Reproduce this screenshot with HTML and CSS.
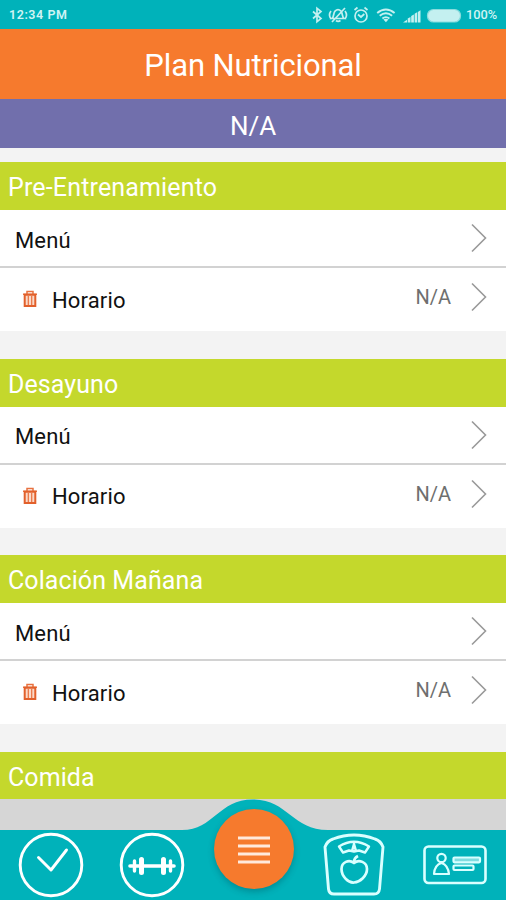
FILE: index.html
```html
<!DOCTYPE html>
<html lang="es">
<head>
<meta charset="utf-8">
<title>Plan Nutricional</title>
<link rel="stylesheet" href="styles.css">
</head>
<body>
<svg class="defs" aria-hidden="true">
  <symbol id="chevron" viewBox="0 0 16 30"><path d="M1 1.5 14.5 15 1 28.5" fill="none" stroke="#999" stroke-width="1.6"/></symbol>
  <symbol id="trash" viewBox="0 0 16 18"><path d="M1 4.200h14M5 3.700V1.500h6v2.200" fill="none" stroke="#e8713f" stroke-width="1.500"/><path d="M2.700 4.700h10.600v11.400H2.700z" fill="#fbd9c8" stroke="#e2602b" stroke-width="2"/><path d="M6.300 6v9M9.700 6v9" stroke="#e8713f" stroke-width="1.200"/></symbol>
</svg>
<div class="app">
  <div class="status">
    <span class="time">12:34 PM</span>
    <svg class="status-icons" viewBox="0 0 154 28" fill="none" stroke="#c4f0f0" stroke-width="1.700">
      <path d="m4 10.500 8 7-4 3.300V7.200l4 3.300-8 7"/>
      <path d="M23 17.500c2-1.500 1.300-5.500 3-7.300q3-3 6 0c1.700 1.800 1 5.800 3 7.300zM27 19.500q2 1.700 4.500 0M23 21 36 7M22 10q-3 4 0 8M36 10q3 4 0 8"/>
      <circle cx="52" cy="15" r="6"/><path d="m49 13.500 3 2.500 3.300-3M45.500 9l3-2.500M58.500 9l-3-2.500"/>
      <path d="M68.200 12q8.700-7 17.400 0M70.700 14.800q6.200-5 12.400 0M73.400 17.400q3.500-2.600 7 0" stroke-width="1.900"/><path d="m74.400 18.500 2.500 2.700 2.500-2.700q-2.500-1.500-5 0z" fill="#c4f0f0" stroke="none"/>
      <path d="M94 21.500 98 18.800V21.500zM98.700 21.500v-4l2.800-1.600v5.600zM102.200 21.500v-6.500l2.700-1.600v8.100zM105.600 21.500v-8.700l2.500-1.500v10.200zM108.800 21.500V11l2.700-1.700v12.200z" fill="#c4f0f0" stroke="none"/>
      <rect x="118.500" y="8.500" width="33" height="12.500" rx="6" fill="#c4f0f0" stroke="#8adcdd" stroke-width="1.200"/>
    </svg>
    <span class="percent">100%</span>
  </div>
  <header class="title"><span>Plan Nutricional</span></header>
  <div class="subtitle"><span>N/A</span></div>
  <main class="meals">
    <section class="meal">
      <h2><span class="pre">Pre-Entrenamiento</span></h2>
      <div class="row menu"><span class="name">Menú</span><svg class="chevron"><use href="#chevron"/></svg></div>
      <div class="row time-row"><svg class="trash"><use href="#trash"/></svg><span class="name">Horario</span><span class="value">N/A</span><svg class="chevron"><use href="#chevron"/></svg></div>
    </section>
    <section class="meal">
      <h2><span>Desayuno</span></h2>
      <div class="row menu"><span class="name">Menú</span><svg class="chevron"><use href="#chevron"/></svg></div>
      <div class="row time-row"><svg class="trash"><use href="#trash"/></svg><span class="name">Horario</span><span class="value">N/A</span><svg class="chevron"><use href="#chevron"/></svg></div>
    </section>
    <section class="meal">
      <h2><span>Colación Mañana</span></h2>
      <div class="row menu"><span class="name">Menú</span><svg class="chevron"><use href="#chevron"/></svg></div>
      <div class="row time-row"><svg class="trash"><use href="#trash"/></svg><span class="name">Horario</span><span class="value">N/A</span><svg class="chevron"><use href="#chevron"/></svg></div>
    </section>
    <section class="meal last"><h2><span>Comida</span></h2></section>
  </main>
  <nav class="tabs">
    <svg class="tabs-bg" viewBox="0 0 506 101"><path d="M0 31H182C214 31 218 .5 253 .5S292 31 328 31H506V101H0z" fill="#00b2ba"/></svg>
    <svg class="tab" viewBox="0 0 66 66"><circle cx="33" cy="33" r="30.800" /><path d="m20.500 25.500 12.500 12.500 15.500-20" stroke-linecap="round"/></svg>
    <svg class="tab" viewBox="0 0 66 66"><circle cx="33" cy="33" r="30.800"/><g stroke-linecap="round"><path d="M11 34h44" stroke-width="3.600"/><path d="M15.500 29v10M51.500 29v10" stroke-width="3.400"/><path d="M22.500 27.500v13M44.500 27.500v13" stroke-width="5"/></g></svg>
    <button class="fab" aria-label="Menú"><svg viewBox="0 0 34 30"><path d="M1 4h32M1 12h32M1 20h32M1 28h32" stroke="#ffe9dc" stroke-width="2.900"/></svg></button>
    <svg class="tab scale" viewBox="0 0 66 66"><path d="M4 15Q6 9 12 7 33-1 54 7q6 2 8 8L58.500 57q-.5 5-5.500 5H13q-5 0-5.500-5z"/><path d="M18 14.500Q33 5 48 14.500l-4 6-6-2-5 1-5-1-6 2zM33 12l-2 7h4z" stroke-width="2.400"/><path d="M33 31c-5-4-12.500-1-12.500 6C20.500 44 27 51 33 50.500S46 44 46 37c0-7-8-10-13-6zM33 30q0-4 4-6" stroke-width="2.700"/></svg>
    <svg class="tab card" viewBox="0 0 66 66"><rect x="2.500" y="14.500" width="61" height="36.500" rx="4" stroke-width="2.600"/><g stroke-width="2.200"><circle cx="19.500" cy="26" r="4.200"/><path d="M12 42q.5-9 7.500-11 6.500 2 7.500 11z"/><rect x="31.500" y="25.500" width="26.500" height="4.800" rx="1" fill="#7fdde0"/><rect x="31.500" y="33.500" width="20" height="4.500" rx="1"/></g></svg>
  </nav>
</div>
</body>
</html>
```
FILE: styles.css
```css
* { box-sizing: border-box; }
body { margin: 0; font-family: Roboto, "Liberation Sans", sans-serif; background: #f3f3f3; }
.defs { position: absolute; width: 0; height: 0; }
.app { width: 506px; height: 900px; overflow: hidden; display: flex; flex-direction: column; }
.status { flex: none; height: 29px; background: #00b2ba; color: #d0f4f4; display: flex; align-items: center; padding: 0 8px 0 9px; font-size: 13px; font-weight: 500; }
.time { letter-spacing: .55px; width: 70px; font-size: 12.500px; font-weight: 600; }
.status-icons { width: 154px; height: 28px; margin-left: auto; margin-right: 3px; }
.percent { width: 32px; font-size: 12.800px; }
.title { flex: none; height: 70px; background: #f67a2d; color: #fff; display: flex; align-items: center; justify-content: center; font-size: 31px; padding-top: 3px; }
.title span { letter-spacing: -.1px; }
.subtitle { flex: none; height: 49px; background: #716fac; color: #fff; display: flex; align-items: center; justify-content: center; font-size: 26px; padding-top: 4px; }
.meals { flex: none; padding-top: 14px; height: 651px; display: flex; flex-direction: column; gap: 27.500px; }
.meal { flex: none; height: 169px; background: #fff; }
.meal.last { height: 47.500px; }
h2 { margin: 0; height: 48px; background: #c4d82c; color: #fff; font-size: 25px; font-weight: 400; display: flex; align-items: center; padding: 3px 8px 0; }
h2 span { letter-spacing: .08px; }
h2 .pre { letter-spacing: .16px; }
.row { display: flex; align-items: center; color: #111; font-size: 22px; padding-right: 19px; }
.menu { height: 58px; border-bottom: 2px solid #d2d2d2; padding-left: 15px; }
.menu .name { flex: 1; padding-top: 4px; letter-spacing: .15px; }
.time-row { height: 63px; padding-left: 22px; padding-bottom: 5px; }
.time-row .name { margin-left: 14px; padding-top: 6px; flex: 1; letter-spacing: .15px; }
.value { color: #6f6f6f; font-size: 20px; margin-right: 20px; }
.chevron { width: 16px; height: 30px; }
.trash { width: 16px; height: 18px; margin-top: 4px; }
.tabs { flex: none; height: 101px; background: #d6d6d6; position: relative; display: grid; grid-template-columns: 101px 101px 103px 98px 103px; justify-items: center; padding-top: 33px; }
.tabs-bg { position: absolute; left: 0; top: 0; width: 506px; height: 101px; }
.tab { position: relative; width: 66px; height: 66px; fill: none; stroke: #fff; stroke-width: 2.900; stroke-linejoin: round; }
.scale, .card { stroke: #d9ffff; }
.fab { position: relative; width: 80px; height: 80px; margin-top: -23px; border: 0; border-radius: 50%; background: #f67a2d; padding: 0; display: grid; place-items: center; box-shadow: 0 3px 6px rgba(0,60,70,.3); }
.fab svg { width: 34px; height: 30px; }
```
